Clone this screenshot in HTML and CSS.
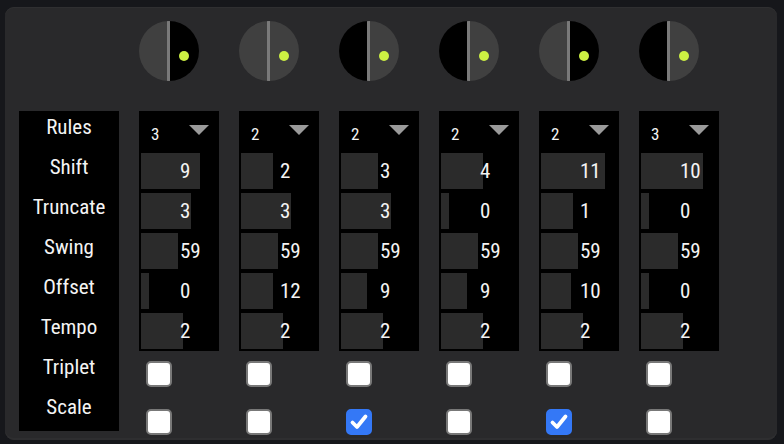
FILE: index.html
```html
<!DOCTYPE html>
<html>
<head>
<meta charset="utf-8">
<link rel="stylesheet" href="styles.css">
</head>
<body>
<div class="panel">
  <div class="labels">
    <div class="label">Rules</div>
    <div class="label">Shift</div>
    <div class="label">Truncate</div>
    <div class="label">Swing</div>
    <div class="label">Offset</div>
    <div class="label">Tempo</div>
    <div class="label">Triplet</div>
    <div class="label">Scale</div>
  </div>

  <div class="strip">
    <div class="knob"><span class="half l on"></span><span class="half r"></span><span class="axis"></span><span class="dot"></span></div>
    <div class="box">
      <div class="select"><span class="sv">3</span><span class="tri"></span></div>
      <div class="row"><span class="bar" style="width:59px"></span><span class="val">9</span></div>
      <div class="row"><span class="bar" style="width:50px"></span><span class="val">3</span></div>
      <div class="row"><span class="bar" style="width:37px"></span><span class="val">59</span></div>
      <div class="row"><span class="bar" style="width:8px"></span><span class="val">0</span></div>
      <div class="row"><span class="bar" style="width:42px"></span><span class="val">2</span></div>
    </div>
    <div class="checks"><span class="cb"></span><span class="cb"></span></div>
  </div>

  <div class="strip">
    <div class="knob"><span class="half l on"></span><span class="half r on"></span><span class="axis"></span><span class="dot"></span></div>
    <div class="box">
      <div class="select"><span class="sv">2</span><span class="tri"></span></div>
      <div class="row"><span class="bar" style="width:32px"></span><span class="val">2</span></div>
      <div class="row"><span class="bar" style="width:50px"></span><span class="val">3</span></div>
      <div class="row"><span class="bar" style="width:37px"></span><span class="val">59</span></div>
      <div class="row"><span class="bar" style="width:32px"></span><span class="val">12</span></div>
      <div class="row"><span class="bar" style="width:42px"></span><span class="val">2</span></div>
    </div>
    <div class="checks"><span class="cb"></span><span class="cb"></span></div>
  </div>

  <div class="strip">
    <div class="knob"><span class="half l"></span><span class="half r on"></span><span class="axis"></span><span class="dot"></span></div>
    <div class="box">
      <div class="select"><span class="sv">2</span><span class="tri"></span></div>
      <div class="row"><span class="bar" style="width:37px"></span><span class="val">3</span></div>
      <div class="row"><span class="bar" style="width:50px"></span><span class="val">3</span></div>
      <div class="row"><span class="bar" style="width:37px"></span><span class="val">59</span></div>
      <div class="row"><span class="bar" style="width:26px"></span><span class="val">9</span></div>
      <div class="row"><span class="bar" style="width:42px"></span><span class="val">2</span></div>
    </div>
    <div class="checks"><span class="cb"></span><span class="cb checked"><svg viewBox="0 0 22 22"><path d="M4.5 11.5 L9 16 L17.5 5.5" fill="none" stroke="#fff" stroke-width="3.8" stroke-linecap="round" stroke-linejoin="round"/></svg></span></div>
  </div>

  <div class="strip">
    <div class="knob"><span class="half l"></span><span class="half r on"></span><span class="axis"></span><span class="dot"></span></div>
    <div class="box">
      <div class="select"><span class="sv">2</span><span class="tri"></span></div>
      <div class="row"><span class="bar" style="width:42px"></span><span class="val">4</span></div>
      <div class="row"><span class="bar" style="width:8px"></span><span class="val">0</span></div>
      <div class="row"><span class="bar" style="width:37px"></span><span class="val">59</span></div>
      <div class="row"><span class="bar" style="width:26px"></span><span class="val">9</span></div>
      <div class="row"><span class="bar" style="width:42px"></span><span class="val">2</span></div>
    </div>
    <div class="checks"><span class="cb"></span><span class="cb"></span></div>
  </div>

  <div class="strip">
    <div class="knob"><span class="half l on"></span><span class="half r"></span><span class="axis"></span><span class="dot"></span></div>
    <div class="box">
      <div class="select"><span class="sv">2</span><span class="tri"></span></div>
      <div class="row"><span class="bar" style="width:64px"></span><span class="val">11</span></div>
      <div class="row"><span class="bar" style="width:32px"></span><span class="val">1</span></div>
      <div class="row"><span class="bar" style="width:37px"></span><span class="val">59</span></div>
      <div class="row"><span class="bar" style="width:30px"></span><span class="val">10</span></div>
      <div class="row"><span class="bar" style="width:42px"></span><span class="val">2</span></div>
    </div>
    <div class="checks"><span class="cb"></span><span class="cb checked"><svg viewBox="0 0 22 22"><path d="M4.5 11.5 L9 16 L17.5 5.5" fill="none" stroke="#fff" stroke-width="3.8" stroke-linecap="round" stroke-linejoin="round"/></svg></span></div>
  </div>

  <div class="strip">
    <div class="knob"><span class="half l"></span><span class="half r on"></span><span class="axis"></span><span class="dot"></span></div>
    <div class="box">
      <div class="select"><span class="sv">3</span><span class="tri"></span></div>
      <div class="row"><span class="bar" style="width:62px"></span><span class="val">10</span></div>
      <div class="row"><span class="bar" style="width:8px"></span><span class="val">0</span></div>
      <div class="row"><span class="bar" style="width:37px"></span><span class="val">59</span></div>
      <div class="row"><span class="bar" style="width:8px"></span><span class="val">0</span></div>
      <div class="row"><span class="bar" style="width:42px"></span><span class="val">2</span></div>
    </div>
    <div class="checks"><span class="cb"></span><span class="cb"></span></div>
  </div>
</div>
</body>
</html>
```

FILE: styles.css
```css
html, body {
  margin: 0;
  padding: 0;
  background: #16171b;
  width: 784px;
  height: 444px;
  overflow: hidden;
}

body {
  font-family: "Roboto Condensed", "Liberation Sans Narrow", "DejaVu Sans Condensed", Roboto, sans-serif;
  color: #f4f4f4;
}

.panel {
  box-sizing: border-box;
  margin: 7px 0 0 5px;
  width: 772px;
  height: 433px;
  background: #29292b;
  border-radius: 9px;
  box-shadow: inset 0 1px 0 #2f2f31, inset 0 -2px 0 #2e2e30;
  padding: 14px 0 0 14px;
  display: flex;
  align-items: flex-start;
  gap: 20px;
}

.labels {
  margin-top: 90px;
  width: 100px;
  height: 320px;
  background: #000;
  display: flex;
  flex-direction: column;
}

.label {
  height: 40px;
  line-height: 32px;
  text-align: center;
  font-size: 21px;
}

.strip {
  width: 80px;
  display: flex;
  flex-direction: column;
}

.knob {
  position: relative;
  width: 60px;
  height: 60px;
  border-radius: 50%;
  overflow: hidden;
  display: flex;
  margin-bottom: 30px;
}

.half {
  width: 30px;
  height: 60px;
  background: #000;
}

.half.on {
  background: #404040;
}

.axis {
  position: absolute;
  left: 28px;
  top: 0;
  width: 3px;
  height: 60px;
  background: #7a7a7a;
}

.dot {
  position: absolute;
  left: 40px;
  top: 30px;
  width: 10px;
  height: 10px;
  border-radius: 50%;
  background: #ccf043;
}

.box {
  width: 80px;
  height: 240px;
  background: #000;
  box-sizing: border-box;
  padding: 0 2px;
  display: flex;
  flex-direction: column;
}

.select {
  height: 40px;
  display: flex;
  align-items: center;
  justify-content: space-between;
  padding: 0 8px 0 10px;
  font-size: 17px;
}

.sv {
  margin-top: 6px;
}

.tri {
  width: 0;
  height: 0;
  border-left: 10px solid transparent;
  border-right: 10px solid transparent;
  border-top: 10px solid #9a9a9a;
  margin-top: -2px;
}

.row {
  height: 40px;
  display: grid;
  align-items: center;
}

.bar, .val {
  grid-row: 1;
  grid-column: 1;
}

.bar {
  height: 36px;
  background: #2b2b2b;
}

.val {
  padding-left: 39px;
  font-size: 21px;
  line-height: 36px;
}

.checks {
  display: flex;
  flex-direction: column;
  gap: 22px;
  padding: 10px 0 0 7px;
}

.cb {
  box-sizing: border-box;
  width: 26px;
  height: 26px;
  border-radius: 5px;
  border: 2px solid #787878;
  background: #fff;
  display: block;
}

.cb.checked {
  border-color: #3478f6;
  background: #3478f6;
}

.cb svg {
  display: block;
  width: 22px;
  height: 22px;
}
```
